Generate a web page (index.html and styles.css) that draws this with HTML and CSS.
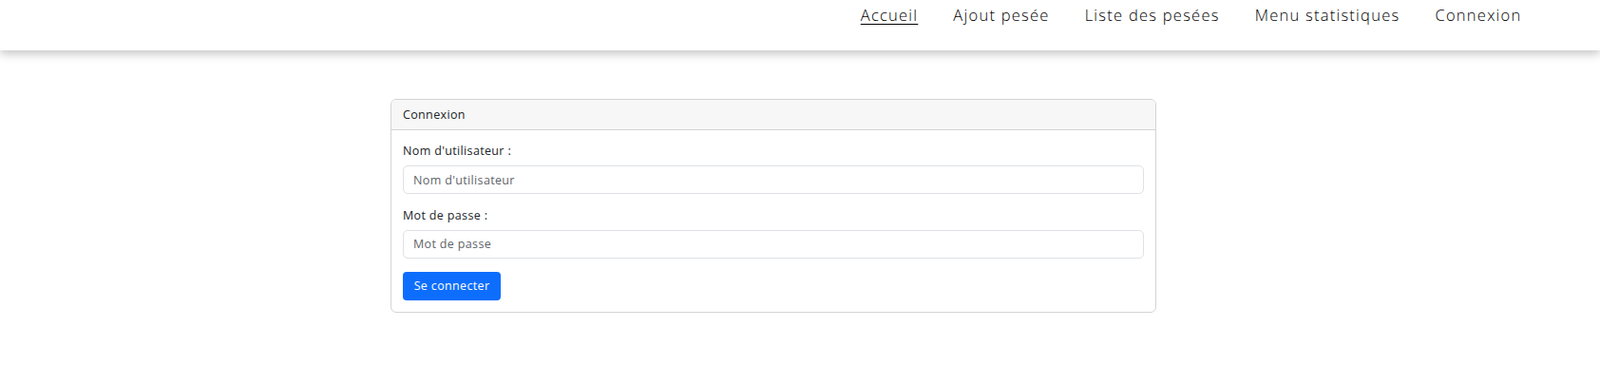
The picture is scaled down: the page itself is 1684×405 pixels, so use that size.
FILE: index.html
```html
<!DOCTYPE html>
<html lang="fr">
<head>
<meta charset="utf-8">
<title>Connexion</title>
<link rel="stylesheet" href="styles.css">
</head>
<body>
<header class="topbar">
  <nav class="nav">
    <a class="nav-link active" href="#">Accueil</a>
    <a class="nav-link" href="#">Ajout pesée</a>
    <a class="nav-link" href="#">Liste des pesées</a>
    <a class="nav-link" href="#">Menu statistiques</a>
    <a class="nav-link" href="#">Connexion</a>
  </nav>
</header>
<main class="main">
  <section class="card">
    <div class="card-header">Connexion</div>
    <form class="card-body">
      <div class="group">
        <label class="label" for="user">Nom d'utilisateur :</label>
        <input class="input" id="user" type="text" placeholder="Nom d'utilisateur">
      </div>
      <div class="group">
        <label class="label" for="pass">Mot de passe :</label>
        <input class="input" id="pass" type="password" placeholder="Mot de passe">
      </div>
      <button class="btn" type="button">Se connecter</button>
    </form>
  </section>
</main>
</body>
</html>
```
FILE: styles.css
```css
* { box-sizing: border-box; }
html, body { margin: 0; padding: 0; background: #fff; }
body {
  font-family: "Open Sans", "Liberation Sans", sans-serif;
  color: #212529;
}
.topbar {
  height: 53px;
  background: #fff;
  box-shadow: 0 4px 9px rgba(0, 0, 0, 0.22);
  position: relative;
  z-index: 1;
}
.nav {
  display: flex;
  justify-content: flex-end;
  align-items: flex-start;
  padding-right: 64px;
  height: 100%;
}
.nav-link {
  font-size: 16.5px;
  font-weight: 300;
  color: #000;
  text-decoration: none;
  line-height: 22px;
  padding: 5px 18.5px 0;
  letter-spacing: 1.25px;
}
.nav-link.active { text-decoration: underline; text-underline-offset: 3px; text-decoration-thickness: 1px; }
.main {
  padding-top: 51px;
  padding-left: 411px;
}
.card {
  width: 806px;
  border: 1px solid #d4d4d4;
  border-radius: 6px;
  background: #fff;
  font-size: 12.5px;
  letter-spacing: 0.35px;
}
.card-header {
  height: 32px;
  padding: 0 12px;
  display: flex;
  align-items: center;
  background: #f7f7f7;
  border-bottom: 1px solid #d4d4d4;
  border-radius: 5px 5px 0 0;
  color: #212529;
}
.card-body {
  padding: 12px 12px 12px;
  margin: 0;
}
.group { margin-bottom: 12.5px; }
.label {
  display: block;
  line-height: 19px;
  margin-bottom: 6px;
  color: #212529;
}
.input {
  display: block;
  width: 100%;
  height: 30px;
  border: 1px solid #dee2e6;
  border-radius: 5px;
  padding: 0 10px;
  font-family: inherit;
  font-size: 12.5px;
  letter-spacing: 0.35px;
  color: #212529;
  background: #fff;
  outline: none;
}
.input::placeholder { color: #5f646a; }
.btn {
  display: block;
  margin-top: 14px;
  height: 30px;
  width: 103px;
  padding: 0;
  border: 0;
  border-radius: 4px;
  background: #0d6efd;
  color: #fff;
  font-family: inherit;
  font-size: 12.5px;
  font-weight: 500;
  letter-spacing: 0.35px;
  cursor: pointer;
}
```
